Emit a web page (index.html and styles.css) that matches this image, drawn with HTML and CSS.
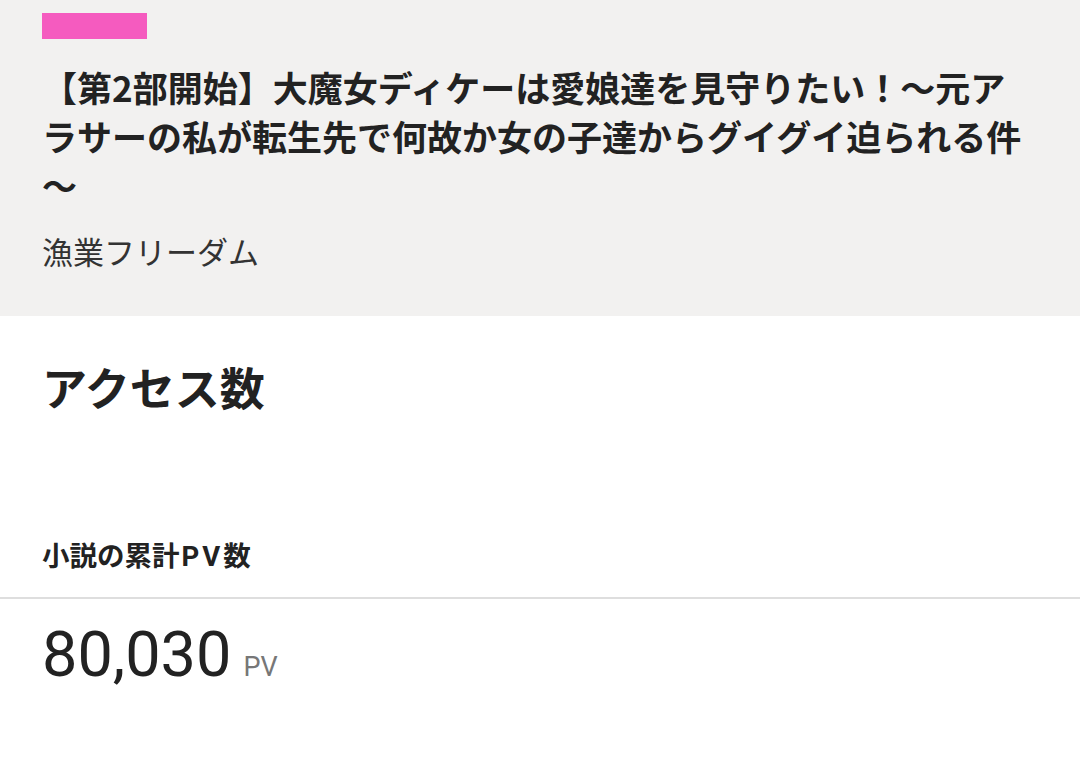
FILE: index.html
```html
<!DOCTYPE html>
<html lang="ja">
<head>
<meta charset="utf-8">
<link rel="stylesheet" href="styles.css">
</head>
<body>
<header class="novel-head">
  <div class="tag-bar"></div>
  <h1 class="novel-title">【第2部開始】大魔女ディケーは愛娘達を見守りたい！〜元アラサーの私が転生先で何故か女の子達からグイグイ迫られる件〜</h1>
  <p class="novel-author">漁業フリーダム</p>
</header>
<main class="access">
  <h2 class="access-title">アクセス数</h2>
  <h3 class="pv-label">小説の累計<span class="pv-latin">PV</span>数</h3>
  <div class="pv-row">
    <span class="pv-num">80,030</span><span class="pv-unit">PV</span>
  </div>
</main>
</body>
</html>
```
FILE: styles.css
```css
html, body {
  margin: 0;
  padding: 0;
  background: #ffffff;
}
body {
  font-family: "Noto Sans CJK JP", "Noto Sans", sans-serif;
  color: #222222;
  width: 1080px;
  height: 765px;
  overflow: hidden;
}
.novel-head {
  background: #f2f1f0;
  padding: 13px 42px 44px 42px;
  height: 316px;
  box-sizing: border-box;
}
.tag-bar {
  width: 105px;
  height: 26px;
  background: #f55bbf;
}
.novel-title {
  margin: 23px 0 0 0;
  font-size: 35px;
  line-height: 49px;
  font-weight: 700;
  color: #222222;
  line-break: anywhere;
}
.novel-author {
  margin: 21px 0 0 0;
  font-size: 31px;
  line-height: 42px;
  font-weight: 400;
  color: #333333;
}
.access {
  padding-top: 42px;
}
.access-title {
  margin: 0;
  padding: 0 42px;
  font-size: 45px;
  line-height: 58px;
  font-weight: 700;
  color: #222222;
}
.pv-label {
  margin: 119px 0 0 0;
  padding: 0 42px 21px 42px;
  font-size: 27.5px;
  line-height: 38px;
  font-weight: 700;
  color: #222222;
  border-bottom: 2px solid #dedede;
}
.pv-latin {
  font-family: Roboto, "Noto Sans", sans-serif;
  letter-spacing: 3px;
  margin-left: 2px;
}
.pv-row {
  padding: 19px 42px 0 42px;
  display: flex;
  align-items: baseline;
  gap: 12px;
}
.pv-num {
  font-family: Roboto, "Noto Sans", sans-serif;
  font-size: 63px;
  line-height: 74px;
  color: #222222;
}
.pv-unit {
  font-family: Roboto, "Noto Sans", sans-serif;
  font-size: 27px;
  color: #777777;
}
```
